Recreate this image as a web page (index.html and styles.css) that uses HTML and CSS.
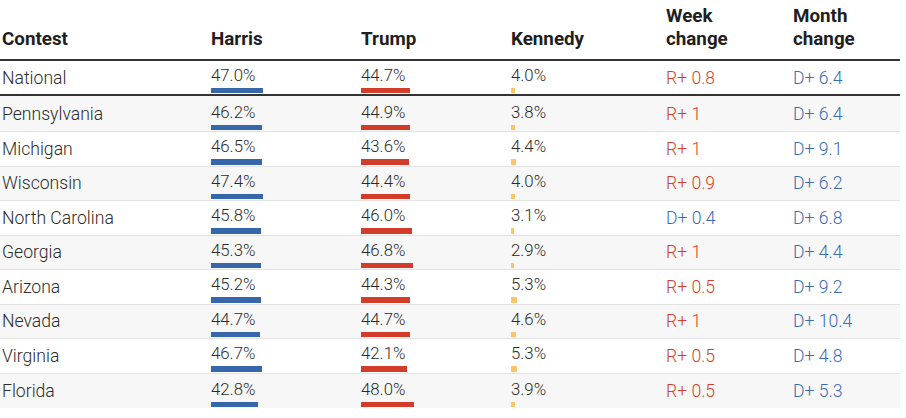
FILE: index.html
```html
<!DOCTYPE html>
<html lang="en">
<head>
<meta charset="utf-8">
<title>Polling averages</title>
<link rel="stylesheet" href="styles.css">
</head>
<body>
<div class="table">
  <div class="row head">
    <div class="cell name">Contest</div>
    <div class="cell">Harris</div>
    <div class="cell">Trump</div>
    <div class="cell">Kennedy</div>
    <div class="cell">Week<br>change</div>
    <div class="cell">Month<br>change</div>
  </div>

  <div class="row national">
    <div class="cell name">National</div>
    <div class="cell pct"><span class="val">47.0%</span><span class="bar h" style="width:51.7px"></span></div>
    <div class="cell pct"><span class="val">44.7%</span><span class="bar t" style="width:49.2px"></span></div>
    <div class="cell pct"><span class="val">4.0%</span><span class="bar k" style="width:4.4px"></span></div>
    <div class="cell chg r">R+ 0.8</div>
    <div class="cell chg d">D+ 6.4</div>
  </div>

  <div class="row alt first">
    <div class="cell name">Pennsylvania</div>
    <div class="cell pct"><span class="val">46.2%</span><span class="bar h" style="width:50.8px"></span></div>
    <div class="cell pct"><span class="val">44.9%</span><span class="bar t" style="width:49.4px"></span></div>
    <div class="cell pct"><span class="val">3.8%</span><span class="bar k" style="width:4.2px"></span></div>
    <div class="cell chg r">R+ 1</div>
    <div class="cell chg d">D+ 6.4</div>
  </div>

  <div class="row">
    <div class="cell name">Michigan</div>
    <div class="cell pct"><span class="val">46.5%</span><span class="bar h" style="width:51.2px"></span></div>
    <div class="cell pct"><span class="val">43.6%</span><span class="bar t" style="width:48.0px"></span></div>
    <div class="cell pct"><span class="val">4.4%</span><span class="bar k" style="width:4.8px"></span></div>
    <div class="cell chg r">R+ 1</div>
    <div class="cell chg d">D+ 9.1</div>
  </div>

  <div class="row alt">
    <div class="cell name">Wisconsin</div>
    <div class="cell pct"><span class="val">47.4%</span><span class="bar h" style="width:52.1px"></span></div>
    <div class="cell pct"><span class="val">44.4%</span><span class="bar t" style="width:48.8px"></span></div>
    <div class="cell pct"><span class="val">4.0%</span><span class="bar k" style="width:4.4px"></span></div>
    <div class="cell chg r">R+ 0.9</div>
    <div class="cell chg d">D+ 6.2</div>
  </div>

  <div class="row">
    <div class="cell name">North Carolina</div>
    <div class="cell pct"><span class="val">45.8%</span><span class="bar h" style="width:50.4px"></span></div>
    <div class="cell pct"><span class="val">46.0%</span><span class="bar t" style="width:50.6px"></span></div>
    <div class="cell pct"><span class="val">3.1%</span><span class="bar k" style="width:3.4px"></span></div>
    <div class="cell chg d">D+ 0.4</div>
    <div class="cell chg d">D+ 6.8</div>
  </div>

  <div class="row alt">
    <div class="cell name">Georgia</div>
    <div class="cell pct"><span class="val">45.3%</span><span class="bar h" style="width:49.8px"></span></div>
    <div class="cell pct"><span class="val">46.8%</span><span class="bar t" style="width:51.5px"></span></div>
    <div class="cell pct"><span class="val">2.9%</span><span class="bar k" style="width:3.2px"></span></div>
    <div class="cell chg r">R+ 1</div>
    <div class="cell chg d">D+ 4.4</div>
  </div>

  <div class="row">
    <div class="cell name">Arizona</div>
    <div class="cell pct"><span class="val">45.2%</span><span class="bar h" style="width:49.7px"></span></div>
    <div class="cell pct"><span class="val">44.3%</span><span class="bar t" style="width:48.7px"></span></div>
    <div class="cell pct"><span class="val">5.3%</span><span class="bar k" style="width:5.8px"></span></div>
    <div class="cell chg r">R+ 0.5</div>
    <div class="cell chg d">D+ 9.2</div>
  </div>

  <div class="row alt">
    <div class="cell name">Nevada</div>
    <div class="cell pct"><span class="val">44.7%</span><span class="bar h" style="width:49.2px"></span></div>
    <div class="cell pct"><span class="val">44.7%</span><span class="bar t" style="width:49.2px"></span></div>
    <div class="cell pct"><span class="val">4.6%</span><span class="bar k" style="width:5.1px"></span></div>
    <div class="cell chg r">R+ 1</div>
    <div class="cell chg d">D+ 10.4</div>
  </div>

  <div class="row">
    <div class="cell name">Virginia</div>
    <div class="cell pct"><span class="val">46.7%</span><span class="bar h" style="width:51.4px"></span></div>
    <div class="cell pct"><span class="val">42.1%</span><span class="bar t" style="width:46.3px"></span></div>
    <div class="cell pct"><span class="val">5.3%</span><span class="bar k" style="width:5.8px"></span></div>
    <div class="cell chg r">R+ 0.5</div>
    <div class="cell chg d">D+ 4.8</div>
  </div>

  <div class="row alt last">
    <div class="cell name">Florida</div>
    <div class="cell pct"><span class="val">42.8%</span><span class="bar h" style="width:47.1px"></span></div>
    <div class="cell pct"><span class="val">48.0%</span><span class="bar t" style="width:52.8px"></span></div>
    <div class="cell pct"><span class="val">3.9%</span><span class="bar k" style="width:4.3px"></span></div>
    <div class="cell chg r">R+ 0.5</div>
    <div class="cell chg d">D+ 5.3</div>
  </div>
</div>
</body>
</html>
```

FILE: styles.css
```css
html, body {
  margin: 0;
  padding: 0;
  background: #ffffff;
}

body {
  font-family: Roboto, "Liberation Sans", sans-serif;
  color: #2b2b2b;
}

.table {
  width: 900px;
}

.row {
  display: grid;
  grid-template-columns: 211px 150px 150px 155px 127px 107px;
  height: 34.5px;
  box-sizing: border-box;
  border-bottom: 1px solid #e2e2e2;
}

.row.alt {
  background: #f7f7f7;
}

.row.head {
  height: 61px;
  border-bottom: 2px solid #333333;
  align-items: end;
  padding-bottom: 7px;
  font-weight: 700;
  font-size: 18.8px;
  line-height: 23.6px;
  color: #1e1e1e;
}

.row.national {
  height: 35px;
  border-bottom: 2px solid #333333;
}

.row.first {
  height: 36px;
}

.row.last {
  border-bottom: none;
}

.cell {
  padding: 0;
}

.cell.name {
  padding-left: 2px;
}

.row:not(.head) .cell {
  display: flex;
  flex-direction: column;
  justify-content: center;
  font-weight: 300;
  font-size: 17.6px;
  line-height: 20px;
}

.row:not(.head) .cell.pct {
  justify-content: flex-end;
  padding-bottom: 1px;
}

.val {
  font-size: 16.8px;
  line-height: 18px;
}

.bar {
  display: block;
  height: 5.5px;
  margin-top: 4px;
}

.bar.h { background: #3767ab; }
.bar.t { background: #d23c28; }
.bar.k { background: #fdc46b; }

.chg.r { color: #d63f2b; }
.chg.d { color: #3b6cb3; }
```
